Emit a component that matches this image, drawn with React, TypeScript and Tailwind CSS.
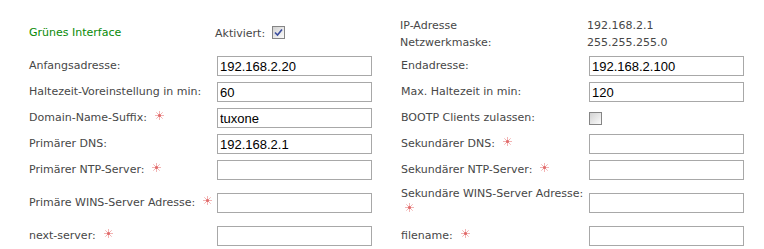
import React from "react";

function Star() {
  return (
    <svg
      width="9"
      height="9"
      viewBox="0 0 9 9"
      className="ml-[8px] inline-block relative -top-[3px] shrink-0"
    >
      <g stroke="#f2b4b4" strokeWidth="1">
        <line x1="4.5" y1="0" x2="4.5" y2="9" />
        <line x1="0" y1="4.5" x2="9" y2="4.5" />
        <line x1="1.3" y1="1.3" x2="7.7" y2="7.7" />
        <line x1="7.7" y1="1.3" x2="1.3" y2="7.7" />
      </g>
      <circle cx="4.5" cy="4.5" r="1.5" fill="#e06a6a" />
    </svg>
  );
}

function Checkbox({ checked }: { checked?: boolean }) {
  return (
    <span className="inline-flex h-[13px] w-[13px] items-center justify-center border border-[#858585] bg-gradient-to-br from-[#d2d2d2] to-[#fbfbfb]">
      {checked && (
        <svg width="9" height="9" viewBox="0 0 9 9">
          <path
            d="M1 4.5 L3.5 7 L8 1.5"
            fill="none"
            stroke="#3a4c9e"
            strokeWidth="1.6"
          />
        </svg>
      )}
    </span>
  );
}

function Field({ value }: { value?: string }) {
  return (
    <input
      readOnly
      value={value ?? ""}
      className="ml-px h-[20px] w-[155px] border border-[#a8a8a8] bg-white px-[2px] font-['Liberation_Sans',Arial,sans-serif] text-[13px] text-black outline-none"
    />
  );
}

function Label({ text, req }: { text: string; req?: boolean }) {
  return (
    <div className="flex w-[187px] shrink-0 items-center">
      <span>{text}</span>
      {req && <Star />}
    </div>
  );
}

interface Row {
  left: string;
  leftReq?: boolean;
  leftValue?: string;
  right: string;
  rightReq?: boolean;
  rightValue?: string;
  rightCheckbox?: boolean;
}

const rows: Row[] = [
  { left: "Anfangsadresse:", leftValue: "192.168.2.20", right: "Endadresse:", rightValue: "192.168.2.100" },
  { left: "Haltezeit-Voreinstellung in min:", leftValue: "60", right: "Max. Haltezeit in min:", rightValue: "120" },
  { left: "Domain-Name-Suffix:", leftReq: true, leftValue: "tuxone", right: "BOOTP Clients zulassen:", rightCheckbox: true },
  { left: "Primärer DNS:", leftValue: "192.168.2.1", right: "Sekundärer DNS:", rightReq: true },
  { left: "Primärer NTP-Server:", leftReq: true, right: "Sekundärer NTP-Server:", rightReq: true },
];

export default function App() {
  return (
    <div className="h-[249px] w-[764px] overflow-hidden bg-white pl-[29px] pt-[14px] font-['DejaVu_Sans',Verdana,sans-serif] text-[11px] text-[#474747]">
      {/* Header */}
      <div className="flex h-[39px] items-center">
        <div className="w-[187px] shrink-0 text-[#078a07]">Grünes Interface</div>
        <div className="flex w-[185px] shrink-0 items-center -ml-px pt-px">
          <span>Aktiviert:</span>
          <span className="ml-[7px]">
            <Checkbox checked />
          </span>
        </div>
        <div className="flex flex-col leading-[17px]">
          <div className="flex">
            <span className="w-[187px]">IP-Adresse</span>
            <span>192.168.2.1</span>
          </div>
          <div className="flex">
            <span className="w-[187px]">Netzwerkmaske:</span>
            <span>255.255.255.0</span>
          </div>
        </div>
      </div>

      {rows.map((r) => (
        <div key={r.left} className="flex h-[26px] items-center">
          <Label text={r.left} req={r.leftReq} />
          <div className="w-[185px] shrink-0">
            <Field value={r.leftValue} />
          </div>
          <Label text={r.right} req={r.rightReq} />
          <div className="flex">
            {r.rightCheckbox ? (
              <span className="ml-px flex">
                <Checkbox />
              </span>
            ) : (
              <Field value={r.rightValue} />
            )}
          </div>
        </div>
      ))}

      {/* WINS row */}
      <div className="flex h-[40px] items-center">
        <Label text="Primäre WINS-Server Adresse:" req />
        <div className="w-[185px] shrink-0">
          <Field />
        </div>
        <div className="w-[187px] shrink-0 leading-[17px] -mt-[2px]">
          <div>Sekundäre WINS-Server Adresse:</div>
          <div className="flex h-[17px] items-center">
            <span className="-ml-[4px] flex">
              <Star />
            </span>
          </div>
        </div>
        <Field />
      </div>

      {/* next-server row */}
      <div className="flex h-[26px] items-center">
        <Label text="next-server:" req />
        <div className="w-[185px] shrink-0">
          <Field />
        </div>
        <Label text="filename:" req />
        <Field />
      </div>
    </div>
  );
}
